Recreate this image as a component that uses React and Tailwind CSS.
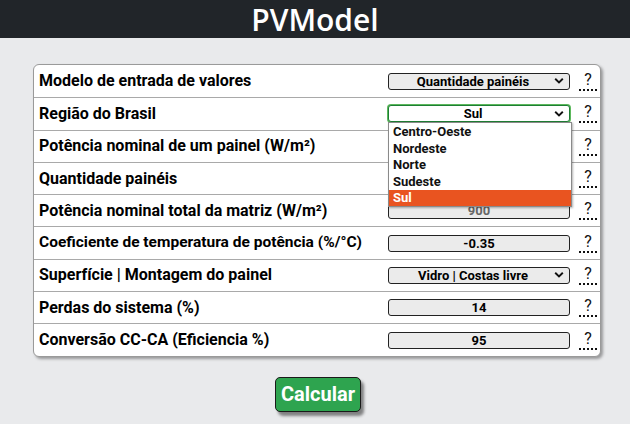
import React from "react";

const Chevron = () => (
  <svg width="10" height="7" viewBox="0 0 10 7" className="absolute right-[5px] top-1/2 -translate-y-1/2">
    <path d="M1.2 1.3 L5 5 L8.8 1.3" fill="none" stroke="#111" strokeWidth="1.9" />
  </svg>
);

const Help = () => (
  <div className="w-[20px] ml-[8px] flex flex-col items-center">
    <span className="text-[16px] leading-[16px] text-[#111] font-normal">?</span>
    <span className="w-[18px] border-b-2 border-dotted border-[#111] mt-[1px]"></span>
  </div>
);

const Field = ({ value, select, focus, muted }) => (
  <div
    className={
      "relative w-[182px] h-[17px] rounded-[3px] bg-[#ebebeb] flex items-center justify-center text-[13px] font-bold leading-none " +
      (focus ? "border border-[#1e7e34] bg-white shadow-[0_0_0_1px_#5cb85c]" : "border border-[#222]") +
      (muted ? " text-[#666]" : " text-black")
    }
  >
    <span className={select ? "pr-[12px]" : ""}>{value}</span>
    {select && <Chevron />}
  </div>
);

const rows = [
  { label: "Modelo de entrada de valores", value: "Quantidade painéis", select: true },
  { label: "Região do Brasil", value: "Sul", select: true, focus: true, open: true },
  { label: "Potência nominal de um painel (W/m²)", value: "" },
  { label: "Quantidade painéis", value: "" },
  { label: "Potência nominal total da matriz (W/m²)", value: "900", muted: true },
  { label: "Coeficiente de temperatura de potência (%/°C)", value: "-0.35", tight: true },
  { label: "Superfície | Montagem do painel", value: "Vidro | Costas livre", select: true },
  { label: "Perdas do sistema (%)", value: "14" },
  { label: "Conversão CC-CA (Eficiencia %)", value: "95" },
];

const options = ["Centro-Oeste", "Nordeste", "Norte", "Sudeste", "Sul"];

export default function App() {
  return (
    <div className="w-[630px] h-[424px] bg-[#e9eaec] font-['Roboto',sans-serif] overflow-hidden">
      <header className="h-[38px] bg-[#212529] flex items-center justify-center">
        <h1 className="text-white text-[30px] leading-none font-['Open_Sans',sans-serif] font-semibold mt-[1px]">PVModel</h1>
      </header>
      <div className="pt-[26px] pl-[33px]">
        <div className="w-[568px] bg-white border border-[#9a9a9a] rounded-[6px] shadow-[2px_2px_3px_rgba(0,0,0,0.35)]">
          {rows.map((r, i) => (
            <div
              key={i}
              className={
                "relative h-[32.3px] flex items-center pl-[5px] pr-[2px] " +
                (i > 0 ? "border-t border-[#a9a9a9]" : "")
              }
            >
              <div className={"flex-1 font-bold text-black leading-none whitespace-nowrap " + (r.tight ? "text-[15.5px]" : "text-[16px]")}>{r.label}</div>
              <Field value={r.value} select={r.select} focus={r.focus} muted={r.muted} />
              <Help />
              {r.open && (
                <div className="absolute z-10 left-[354px] top-[24px] w-[184px] bg-white border border-[#8a8a8a] shadow-[1px_1px_2px_rgba(0,0,0,0.3)]">
                  {options.map((o) => (
                    <div
                      key={o}
                      className={
                        "h-[16.6px] pl-[4px] flex items-center text-[13px] font-bold leading-none " +
                        (o === "Sul" ? "bg-[#e95420] text-white" : "text-[#111]")
                      }
                    >
                      {o}
                    </div>
                  ))}
                </div>
              )}
            </div>
          ))}
        </div>
      </div>
      <div className="flex justify-center pt-[20px] pl-[6px]">
        <button className="w-[86px] h-[35px] rounded-[5px] bg-[#2ea44f] border border-[#1a1a1a] text-white text-[20px] font-bold shadow-[3px_4px_3px_rgba(0,0,0,0.45)] font-['Roboto',sans-serif]">
          Calcular
        </button>
      </div>
    </div>
  );
}
